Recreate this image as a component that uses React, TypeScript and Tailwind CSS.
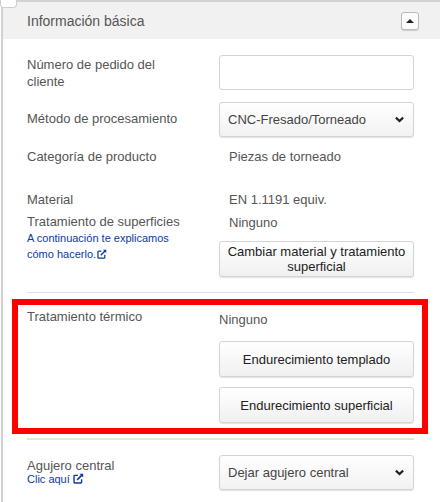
const font = { fontFamily: '"Liberation Sans", Arial, sans-serif' };

function ExternalIcon({ className }: { className: string }) {
  return (
    <svg viewBox="0 0 16 16" className={className} fill="none" stroke="currentColor">
      <path d="M12.5 9v4.5a1 1 0 0 1-1 1h-9a1 1 0 0 1-1-1v-9a1 1 0 0 1 1-1H7" strokeWidth="2" />
      <path d="M6 10 14 2" strokeWidth="2.4" />
      <path d="M9.5 1.2h5.3v5.3z" fill="currentColor" stroke="none" />
    </svg>
  );
}

function SelectBox({ label }: { label: string }) {
  return (
    <div className="w-[195px] h-[35px] flex items-center justify-between pl-[8px] pr-[8px] bg-gradient-to-b from-white to-[#f2f2f2] border border-[#d4d4d4] rounded-[3px] shadow-[0_1px_1px_rgba(0,0,0,0.12)] text-[13px] text-[#444]">
      <span>{label}</span>
      <svg viewBox="0 0 10 7" className="w-[9px] h-[7px] mr-[1px] text-[#222]" fill="none" stroke="currentColor" strokeWidth="2.4">
        <path d="M1 1.4 5 5.2 9 1.4" />
      </svg>
    </div>
  );
}

function ActionButton({ children, h }: { children: React.ReactNode; h: string }) {
  return (
    <button className={`w-[195px] ${h} flex items-center justify-center text-center bg-gradient-to-b from-white to-[#f0f0f0] border border-[#d4d4d4] rounded-[3px] shadow-[0_1px_1px_rgba(0,0,0,0.12)] text-[13px] leading-[15px] text-[#222]`}>
      <span>{children}</span>
    </button>
  );
}

export default function App() {
  return (
    <div className="relative w-[440px] h-[502px] overflow-hidden bg-white text-[13px] text-[#555]" style={font}>
      {/* panel */}
      <div className="ml-px w-[439px] h-[502px] border-l-2 border-t-2 border-[#d2d2d2]">
        {/* header */}
        <div className="h-[37px] bg-[#f1f1f1] pl-[24px] pr-[21px] flex items-center justify-between">
          <span className="text-[14px] text-[#555] relative top-[1px]">Información básica</span>
          <button className="w-[18px] h-[18px] flex items-center justify-center bg-[#fbfbfb] border border-[#bbb] rounded-[3px] shadow-[0_1px_1px_rgba(0,0,0,0.15)]">
            <span className="w-0 h-0 border-x-[4px] border-x-transparent border-b-[4px] border-b-[#222]" />
          </button>
        </div>

        <div className="pl-[24px] w-[411px]">
          <div className="flex pt-[16px]">
            <div className="w-[192px] pt-px leading-[17px]">Número de pedido del<br />cliente</div>
            <div className="w-[195px] h-[35px] bg-white border border-[#d4d4d4] rounded-[3px]" />
          </div>

          <div className="flex items-center mt-[12px]">
            <div className="w-[192px] relative top-[-1px]">Método de procesamiento</div>
            <SelectBox label="CNC-Fresado/Torneado" />
          </div>

          <div className="flex mt-[12px] leading-[16px]">
            <div className="w-[192px]">Categoría de producto</div>
            <div className="pl-[10px]">Piezas de torneado</div>
          </div>

          <div className="flex mt-[27px]">
            <div className="w-[192px]">
              <div className="leading-[16px]">Material</div>
              <div className="leading-[16px] mt-[6px]">Tratamiento de superficies</div>
              <div className="text-[11px] leading-[16px] text-[#0b3a9e]">
                A continuación te explicamos
                <br />
                cómo hacerlo.
                <ExternalIcon className="inline-block w-[10px] h-[10px] ml-px align-[-1px]" />
              </div>
            </div>
            <div>
              <div className="pl-[10px] leading-[16px]">EN 1.1191 equiv.</div>
              <div className="pl-[10px] leading-[16px] mt-[7px]">Ninguno</div>
              <div className="mt-[10px]">
                <ActionButton h="h-[36px]">Cambiar material y tratamiento superficial</ActionButton>
              </div>
            </div>
          </div>

          <div className="w-[387px] h-px bg-[#dedede] mt-[15px]" />
        </div>

        {/* highlighted heat treatment */}
        <div className="ml-[9px] mt-[6px] w-[416px] h-[135px] border-[6px] border-[#ff0000] pl-[9px]">
          <div className="flex pt-[3px]">
            <div className="w-[192px] pt-px leading-[16px]">Tratamiento térmico</div>
            <div className="w-[195px]">
              <div className="leading-[16px] mt-[4px]">Ninguno</div>
              <div className="mt-[13px]">
                <ActionButton h="h-[36px]">Endurecimiento templado</ActionButton>
              </div>
              <div className="mt-[10px]">
                <ActionButton h="h-[36px]">Endurecimiento superficial</ActionButton>
              </div>
            </div>
          </div>
        </div>

        <div className="pl-[24px] w-[411px]">
          <div className="w-[387px] h-[2px] bg-[#e4e4e4] mt-[4px]" />
          <div className="flex items-center mt-[15px]">
            <div className="w-[192px] relative top-[-1px]">
              <div className="leading-[15px]">Agujero central</div>
              <div className="text-[11px] leading-[13px] text-[#0b3a9e]">
                Clic aquí
                <ExternalIcon className="inline-block w-[11px] h-[11px] ml-[3px] align-[-1px]" />
              </div>
            </div>
            <SelectBox label="Dejar agujero central" />
          </div>
        </div>
      </div>

      {/* little tab at top-left */}
      <div className="absolute left-0 top-0 w-[17px] h-[8px] bg-white border-b border-r border-l border-[#cfcfcf] rounded-b-[4px]" />
    </div>
  );
}
